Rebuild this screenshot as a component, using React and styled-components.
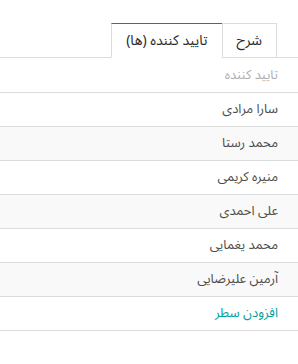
import styled, { createGlobalStyle } from "styled-components";

const Global = createGlobalStyle`
  body {
    margin: 0;
    background: #fff;
    font-family: "Noto Sans Arabic", "Noto Sans", sans-serif;
  }
`;

const Page = styled.div`
  direction: rtl;
  width: 298px;
  padding-top: 23px;
`;

const TabBar = styled.ul`
  display: flex;
  margin: 0;
  padding: 0 21px 0 0;
  list-style: none;
  border-bottom: 1px solid #dcdcdc;
`;

const Tab = styled.li`
  height: 33px;
  padding: 0 14px;
  margin-bottom: -1px;
  display: flex;
  align-items: center;
  font-size: 14px;
  line-height: 1;
  color: #2a2a2a;
  background: #fff;
  border: 1px solid #dcdcdc;
  border-right-width: ${(p) => (p.$first ? "1px" : "0")};
  border-top-color: ${(p) => (p.$active ? "#6f5a6c" : "#dcdcdc")};
  border-bottom-color: ${(p) => (p.$active ? "#fff" : "#dcdcdc")};
`;

const Table = styled.div`
  display: flex;
  flex-direction: column;
`;

const Row = styled.div`
  height: 33px;
  display: flex;
  align-items: center;
  padding: 0 20px;
  font-size: 13px;
  line-height: 1;
  border-bottom: 1px solid #dcdcdc;
  background: ${(p) => (p.$striped ? "#f9f9f9" : "#fff")};
  color: ${(p) => p.$color || "#4c4c4c"};
`;

const HeadRow = styled(Row)`
  height: 34px;
  color: #b0b0b0;
`;

const names = [
  "سارا مرادی",
  "محمد رستا",
  "منیره کریمی",
  "علی احمدی",
  "محمد یغمایی",
  "آرمین علیرضایی",
];

export default function App() {
  return (
    <Page>
      <Global />
      <TabBar>
        <Tab $first>شرح</Tab>
        <Tab $active>تایید کننده (ها)</Tab>
      </TabBar>
      <Table>
        <HeadRow>تایید کننده</HeadRow>
        {names.map((n, i) => (
          <Row key={n} $striped={i % 2 === 1}>
            {n}
          </Row>
        ))}
        <Row $color="#00a09d">افزودن سطر</Row>
      </Table>
    </Page>
  );
}
